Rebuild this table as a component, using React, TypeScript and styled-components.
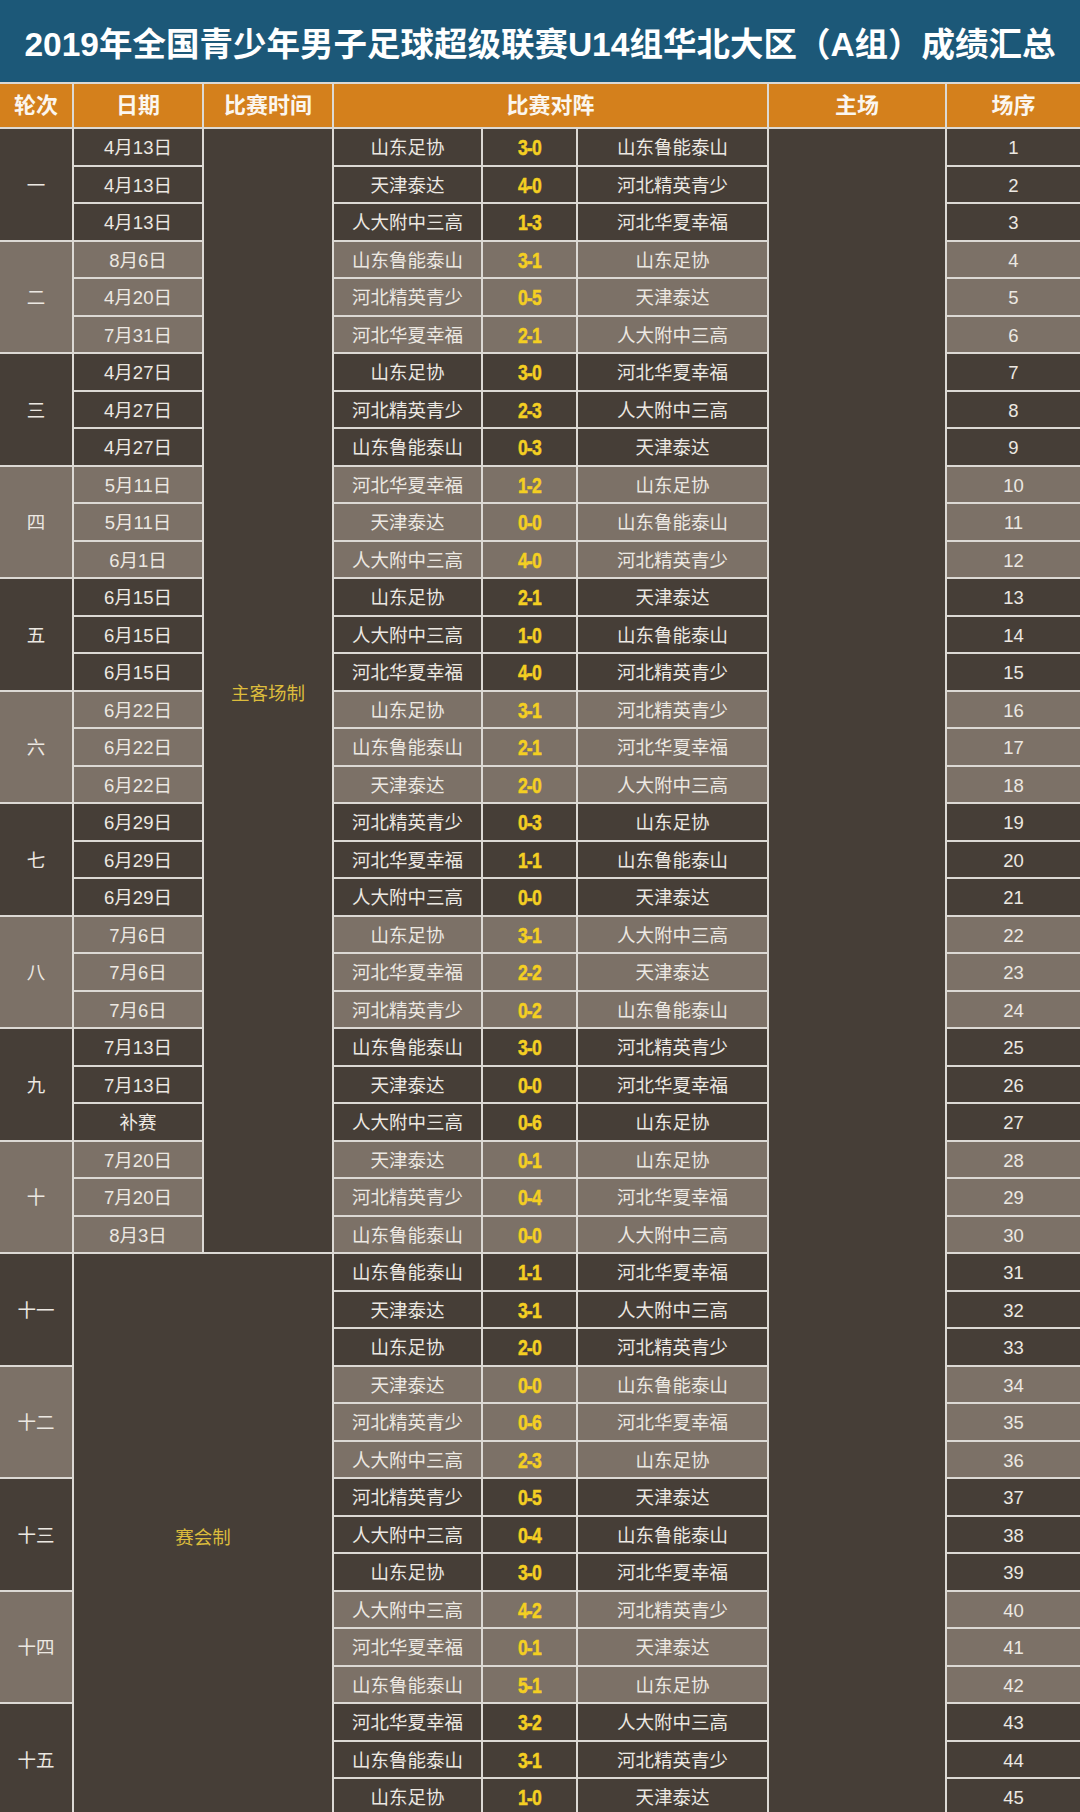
import * as React from "react";
import styled, { createGlobalStyle } from "styled-components";

const GlobalStyle = createGlobalStyle`
  html, body {
    margin: 0;
    padding: 0;
    background: #dcd9d4;
  }
  body {
    font-family: "Liberation Sans", "Noto Sans CJK SC", sans-serif;
  }
`;

const DARK = "#463e37";
const LIGHT = "#7c7167";

type Tone = "dark" | "light";

interface Match {
  date: string;
  home: string;
  score: string;
  away: string;
}

const ROUNDS = ["一", "二", "三", "四", "五", "六", "七", "八", "九", "十", "十一", "十二", "十三", "十四", "十五"];

const MATCHES: Match[] = [
  { date: "4月13日", home: "山东足协", score: "3-0", away: "山东鲁能泰山" },
  { date: "4月13日", home: "天津泰达", score: "4-0", away: "河北精英青少" },
  { date: "4月13日", home: "人大附中三高", score: "1-3", away: "河北华夏幸福" },
  { date: "8月6日", home: "山东鲁能泰山", score: "3-1", away: "山东足协" },
  { date: "4月20日", home: "河北精英青少", score: "0-5", away: "天津泰达" },
  { date: "7月31日", home: "河北华夏幸福", score: "2-1", away: "人大附中三高" },
  { date: "4月27日", home: "山东足协", score: "3-0", away: "河北华夏幸福" },
  { date: "4月27日", home: "河北精英青少", score: "2-3", away: "人大附中三高" },
  { date: "4月27日", home: "山东鲁能泰山", score: "0-3", away: "天津泰达" },
  { date: "5月11日", home: "河北华夏幸福", score: "1-2", away: "山东足协" },
  { date: "5月11日", home: "天津泰达", score: "0-0", away: "山东鲁能泰山" },
  { date: "6月1日", home: "人大附中三高", score: "4-0", away: "河北精英青少" },
  { date: "6月15日", home: "山东足协", score: "2-1", away: "天津泰达" },
  { date: "6月15日", home: "人大附中三高", score: "1-0", away: "山东鲁能泰山" },
  { date: "6月15日", home: "河北华夏幸福", score: "4-0", away: "河北精英青少" },
  { date: "6月22日", home: "山东足协", score: "3-1", away: "河北精英青少" },
  { date: "6月22日", home: "山东鲁能泰山", score: "2-1", away: "河北华夏幸福" },
  { date: "6月22日", home: "天津泰达", score: "2-0", away: "人大附中三高" },
  { date: "6月29日", home: "河北精英青少", score: "0-3", away: "山东足协" },
  { date: "6月29日", home: "河北华夏幸福", score: "1-1", away: "山东鲁能泰山" },
  { date: "6月29日", home: "人大附中三高", score: "0-0", away: "天津泰达" },
  { date: "7月6日", home: "山东足协", score: "3-1", away: "人大附中三高" },
  { date: "7月6日", home: "河北华夏幸福", score: "2-2", away: "天津泰达" },
  { date: "7月6日", home: "河北精英青少", score: "0-2", away: "山东鲁能泰山" },
  { date: "7月13日", home: "山东鲁能泰山", score: "3-0", away: "河北精英青少" },
  { date: "7月13日", home: "天津泰达", score: "0-0", away: "河北华夏幸福" },
  { date: "补赛", home: "人大附中三高", score: "0-6", away: "山东足协" },
  { date: "7月20日", home: "天津泰达", score: "0-1", away: "山东足协" },
  { date: "7月20日", home: "河北精英青少", score: "0-4", away: "河北华夏幸福" },
  { date: "8月3日", home: "山东鲁能泰山", score: "0-0", away: "人大附中三高" },
  { date: "", home: "山东鲁能泰山", score: "1-1", away: "河北华夏幸福" },
  { date: "", home: "天津泰达", score: "3-1", away: "人大附中三高" },
  { date: "", home: "山东足协", score: "2-0", away: "河北精英青少" },
  { date: "", home: "天津泰达", score: "0-0", away: "山东鲁能泰山" },
  { date: "", home: "河北精英青少", score: "0-6", away: "河北华夏幸福" },
  { date: "", home: "人大附中三高", score: "2-3", away: "山东足协" },
  { date: "", home: "河北精英青少", score: "0-5", away: "天津泰达" },
  { date: "", home: "人大附中三高", score: "0-4", away: "山东鲁能泰山" },
  { date: "", home: "山东足协", score: "3-0", away: "河北华夏幸福" },
  { date: "", home: "人大附中三高", score: "4-2", away: "河北精英青少" },
  { date: "", home: "河北华夏幸福", score: "0-1", away: "天津泰达" },
  { date: "", home: "山东鲁能泰山", score: "5-1", away: "山东足协" },
  { date: "", home: "河北华夏幸福", score: "3-2", away: "人大附中三高" },
  { date: "", home: "山东鲁能泰山", score: "3-1", away: "河北精英青少" },
  { date: "", home: "山东足协", score: "1-0", away: "天津泰达" },
];

// first 30 matches were played home-and-away, the rest as a tournament
const HOME_AWAY_ROWS = 30;

const Page = styled.div`
  width: 1080px;
  display: flex;
  flex-direction: column;
  gap: 2px;
  background: #dcd9d4;
`;

const TitleBar = styled.h1`
  margin: 0;
  height: 82px;
  display: flex;
  align-items: center;
  justify-content: center;
  background: #1c5878;
  color: #ffffff;
  font-family: "Liberation Sans", "Noto Sans CJK SC", sans-serif;
  font-size: 33.5px;
  font-weight: 700;
`;

const Table = styled.div`
  display: grid;
  grid-template-columns: 72px 128px 128px 147px 93px 189px 176px 133px;
  grid-template-rows: 43px;
  grid-auto-rows: 35.5px;
  gap: 2px;
`;

const HeadCell = styled.div<{ $span?: number }>`
  grid-column: span ${(p) => p.$span ?? 1};
  display: flex;
  align-items: center;
  justify-content: center;
  padding-bottom: 5px;
  background: #d4801c;
  color: #fbf6ef;
  font-family: "Noto Sans CJK SC", sans-serif;
  font-size: 22px;
  font-weight: 700;
  line-height: 1;
`;

const Cell = styled.div<{
  $tone: Tone;
  $row: number;
  $col: number;
  $rowSpan?: number;
  $colSpan?: number;
}>`
  grid-row: ${(p) => p.$row} / span ${(p) => p.$rowSpan ?? 1};
  grid-column: ${(p) => p.$col} / span ${(p) => p.$colSpan ?? 1};
  display: flex;
  align-items: center;
  justify-content: center;
  padding-top: 3px;
  background: ${(p) => (p.$tone === "dark" ? DARK : LIGHT)};
  color: #ece8e2;
  font-family: "Liberation Sans", "Noto Sans CJK SC", sans-serif;
  font-size: 18.5px;
  line-height: 1;
  white-space: nowrap;
  overflow: hidden;
`;

const FormatLabel = styled.span`
  color: #dcbc3c;
  font-family: "Noto Sans CJK SC", sans-serif;
  font-size: 18.5px;
`;

const Score = styled.span`
  display: inline-block;
  color: #f4cf22;
  font-family: "Liberation Sans", sans-serif;
  font-size: 22px;
  font-weight: 700;
  letter-spacing: -1px;
  -webkit-text-stroke: 0.5px #f4cf22;
  transform: scaleX(0.8);
`;

const App = (): JSX.Element => {
  const toneOf = (index: number): Tone =>
    Math.floor(index / 3) % 2 === 0 ? "dark" : "light";

  return (
    <>
      <GlobalStyle />
      <Page>
        <TitleBar>2019年全国青少年男子足球超级联赛U14组华北大区（A组）成绩汇总</TitleBar>
        <Table>
          <HeadCell>轮次</HeadCell>
          <HeadCell>日期</HeadCell>
          <HeadCell>比赛时间</HeadCell>
          <HeadCell $span={3}>比赛对阵</HeadCell>
          <HeadCell>主场</HeadCell>
          <HeadCell>场序</HeadCell>

          {ROUNDS.map((round, i) => (
            <Cell
              key={`round-${i}`}
              $tone={i % 2 === 0 ? "dark" : "light"}
              $row={2 + i * 3}
              $rowSpan={3}
              $col={1}
            >
              {round}
            </Cell>
          ))}

          <Cell $tone="dark" $row={2} $rowSpan={HOME_AWAY_ROWS} $col={3}>
            <FormatLabel>主客场制</FormatLabel>
          </Cell>
          <Cell
            $tone="dark"
            $row={2 + HOME_AWAY_ROWS}
            $rowSpan={MATCHES.length - HOME_AWAY_ROWS}
            $col={2}
            $colSpan={2}
          >
            <FormatLabel>赛会制</FormatLabel>
          </Cell>
          <Cell $tone="dark" $row={2} $rowSpan={MATCHES.length} $col={7} />

          {MATCHES.map((m, i) => {
            const tone = toneOf(i);
            const row = i + 2;
            return (
              <React.Fragment key={`match-${i}`}>
                {i < HOME_AWAY_ROWS && (
                  <Cell $tone={tone} $row={row} $col={2}>
                    {m.date}
                  </Cell>
                )}
                <Cell $tone={tone} $row={row} $col={4}>
                  {m.home}
                </Cell>
                <Cell $tone={tone} $row={row} $col={5}>
                  <Score>{m.score}</Score>
                </Cell>
                <Cell $tone={tone} $row={row} $col={6}>
                  {m.away}
                </Cell>
                <Cell $tone={tone} $row={row} $col={8}>
                  {i + 1}
                </Cell>
              </React.Fragment>
            );
          })}
        </Table>
      </Page>
    </>
  );
};

export default App;
